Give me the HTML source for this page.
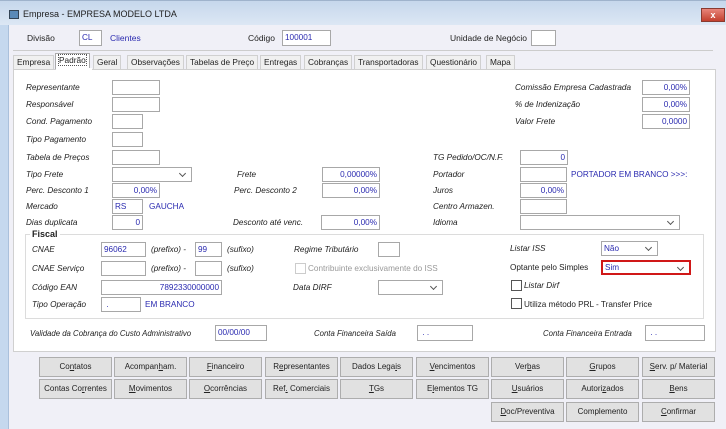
<!DOCTYPE html>
<html><head><meta charset="utf-8"><style>
*{box-sizing:border-box;margin:0;padding:0}
body{width:726px;height:429px;overflow:hidden;position:relative;background:#f0f0f7;font-family:"Liberation Sans",sans-serif;font-size:8.2px;color:#222}
.a{position:absolute;white-space:nowrap}
.t{position:absolute;top:0;left:0;width:726px;height:25px;background:linear-gradient(#c6d7ec,#dce7f4);border-top:1px solid #9fb3cc}
.lf{position:absolute;left:0;top:25px;width:9px;height:404px;background:#c5d8ee;border-right:1px solid #aac0db}
.i{font-style:italic}
.b{position:absolute;background:#fff;border:1px solid #a8a8a8;height:15px;color:#2a2ab0;font-size:8.2px;line-height:13px;padding:0 2px}
.r{text-align:right}
.bl{color:#2a2ab0}
.s::after{content:"";position:absolute;right:6px;top:3px;width:4px;height:4px;border-right:1px solid #555;border-bottom:1px solid #555;transform:rotate(45deg)}
.tab{position:absolute;top:55px;height:14px;line-height:13px;font-size:8.3px;padding:0 3px;border:1px solid #d0d0d0;border-bottom:none;background:#f0f0f0}
.btn{position:absolute;width:73px;height:20px;background:#e1e1e1;border:1px solid #adadad;text-align:center;line-height:18px;font-size:8px;color:#222}
.cb{position:absolute;width:11px;height:11px;border:1px solid #555;background:#fff}
</style></head><body>
<div class="t"></div>
<div class="a" style="left:9px;top:10px;width:10px;height:9px;background:#5a8ab8;border:1px solid #345"></div>
<div class="a" style="left:23px;top:9px;font-size:9px">Empresa - EMPRESA MODELO LTDA</div>
<div class="a" style="left:701px;top:8px;width:24px;height:14px;background:linear-gradient(#e8857a,#c3402e);border:1px solid #8a3a30;color:#fff;font-size:9px;text-align:center;line-height:12px;font-weight:bold">x</div>
<div class="lf"></div>
<div class="a" style="left:27px;top:33px;font-size:8.5px">Divisão</div>
<div class="b" style="left:79px;top:30px;width:23px;height:16px">CL</div>
<div class="a bl" style="left:110px;top:33px;font-size:8.5px">Clientes</div>
<div class="a" style="left:248px;top:33px;font-size:8.5px">Código</div>
<div class="b" style="left:282px;top:30px;width:49px;height:16px">100001</div>
<div class="a" style="left:450px;top:33px;font-size:8.5px">Unidade de Negócio</div>
<div class="b" style="left:531px;top:30px;width:25px;height:16px"></div>
<div class="a" style="left:13px;top:50px;width:700px;height:1px;background:#ccc"></div>
<div class="tab" style="left:13px">Empresa</div>
<div class="tab" style="left:55px;top:53px;height:17px;background:#fff;border-color:#aaa"><span style="outline:1px dotted #555">Padrão</span></div>
<div class="tab" style="left:93px">Geral</div>
<div class="tab" style="left:127px">Observações</div>
<div class="tab" style="left:186px">Tabelas de Preço</div>
<div class="tab" style="left:260px">Entregas</div>
<div class="tab" style="left:304px">Cobranças</div>
<div class="tab" style="left:354px">Transportadoras</div>
<div class="tab" style="left:426px">Questionário</div>
<div class="tab" style="left:486px">Mapa</div>
<div class="a" style="left:13px;top:69px;width:703px;height:283px;background:#fff;border:1px solid #d0d0d0"></div>
<div class="a" style="left:56px;top:68px;width:36px;height:3px;background:#fff"></div>

<div class="a i" style="left:26px;top:83px">Representante</div><div class="b" style="left:112px;top:80px;width:48px"></div>
<div class="a i" style="left:26px;top:100px">Responsável</div><div class="b" style="left:112px;top:97px;width:48px"></div>
<div class="a i" style="left:26px;top:117px">Cond. Pagamento</div><div class="b" style="left:112px;top:114px;width:31px"></div>
<div class="a i" style="left:26px;top:135px">Tipo Pagamento</div><div class="b" style="left:112px;top:132px;width:31px"></div>
<div class="a i" style="left:26px;top:153px">Tabela de  Preços</div><div class="b" style="left:112px;top:150px;width:48px"></div>
<div class="a i" style="left:26px;top:170px">Tipo Frete</div><div class="b s" style="left:112px;top:167px;width:80px"></div>
<div class="a i" style="left:26px;top:186px">Perc. Desconto 1</div><div class="b r" style="left:112px;top:183px;width:48px">0,00%</div>
<div class="a i" style="left:26px;top:202px">Mercado</div><div class="b" style="left:112px;top:199px;width:31px">RS</div><div class="a bl" style="left:149px;top:202px">GAUCHA</div>
<div class="a i" style="left:26px;top:218px">Dias duplicata</div><div class="b r" style="left:112px;top:215px;width:31px">0</div>

<div class="a i" style="left:237px;top:170px">Frete</div><div class="b r" style="left:322px;top:167px;width:58px">0,00000%</div>
<div class="a i" style="left:234px;top:186px">Perc. Desconto 2</div><div class="b r" style="left:322px;top:183px;width:58px">0,00%</div>
<div class="a i" style="left:233px;top:218px">Desconto até venc.</div><div class="b r" style="left:321px;top:215px;width:59px">0,00%</div>

<div class="a i" style="left:515px;top:83px">Comissão Empresa Cadastrada</div><div class="b r" style="left:642px;top:80px;width:48px">0,00%</div>
<div class="a i" style="left:515px;top:100px">% de Indenização</div><div class="b r" style="left:642px;top:97px;width:48px">0,00%</div>
<div class="a i" style="left:515px;top:117px">Valor Frete</div><div class="b r" style="left:642px;top:114px;width:48px">0,0000</div>

<div class="a i" style="left:433px;top:153px">TG Pedido/OC/N.F.</div><div class="b r" style="left:520px;top:150px;width:48px">0</div>
<div class="a i" style="left:433px;top:170px">Portador</div><div class="b" style="left:520px;top:167px;width:47px"></div><div class="a bl" style="left:571px;top:170px">PORTADOR EM BRANCO &gt;&gt;&gt;:</div>
<div class="a i" style="left:433px;top:186px">Juros</div><div class="b r" style="left:520px;top:183px;width:47px">0,00%</div>
<div class="a i" style="left:433px;top:202px">Centro Armazen.</div><div class="b" style="left:520px;top:199px;width:47px"></div>
<div class="a i" style="left:433px;top:218px">Idioma</div><div class="b s" style="left:520px;top:215px;width:160px"></div>

<div class="a" style="left:25px;top:234px;width:679px;height:85px;border:1px solid #dcdcdc"></div>
<div class="a" style="left:30px;top:229px;background:#fff;padding:0 2px;font-weight:bold;font-size:9px">Fiscal</div>
<div class="a i" style="left:32px;top:245px">CNAE</div><div class="b" style="left:101px;top:242px;width:45px">96062</div>
<div class="a i" style="left:151px;top:245px">(prefixo) -</div><div class="b" style="left:195px;top:242px;width:27px">99</div><div class="a i" style="left:227px;top:245px">(sufixo)</div>
<div class="a i" style="left:294px;top:245px">Regime Tributário</div><div class="b" style="left:378px;top:242px;width:22px"></div>
<div class="a i" style="left:32px;top:264px">CNAE Serviço</div><div class="b" style="left:101px;top:261px;width:45px"></div>
<div class="a i" style="left:151px;top:264px">(prefixo) -</div><div class="b" style="left:195px;top:261px;width:27px"></div><div class="a i" style="left:227px;top:264px">(sufixo)</div>
<div class="cb" style="left:295px;top:263px;border-color:#ccc"></div><div class="a" style="left:308px;top:264px;color:#999">Contribuinte exclusivamente do ISS</div>
<div class="a i" style="left:32px;top:283px">Código EAN</div><div class="b r" style="left:101px;top:280px;width:121px">7892330000000</div>
<div class="a i" style="left:293px;top:283px">Data DIRF</div><div class="b s" style="left:378px;top:280px;width:65px"></div>
<div class="a i" style="left:32px;top:300px">Tipo Operação</div><div class="b" style="left:101px;top:297px;width:40px">&nbsp;.</div><div class="a bl" style="left:145px;top:300px">EM BRANCO</div>

<div class="a i" style="left:510px;top:244px">Listar  ISS</div><div class="b s" style="left:601px;top:241px;width:57px">Não</div>
<div class="a" style="left:510px;top:263px">Optante pelo Simples</div><div class="b s" style="left:601px;top:260px;width:90px;border:2px solid #d01818;line-height:11px">Sim</div>
<div class="cb" style="left:511px;top:280px"></div><div class="a i" style="left:524px;top:281px">Listar Dirf</div>
<div class="cb" style="left:511px;top:298px"></div><div class="a" style="left:524px;top:300px">Utiliza método PRL - Transfer Price</div>

<div class="a i" style="left:30px;top:329px;font-size:7.8px">Validade da Cobrança do Custo Administrativo</div><div class="b" style="left:215px;top:325px;width:52px;height:16px">00/00/00</div>
<div class="a i" style="left:314px;top:329px;font-size:7.8px">Conta Financeira Saída</div><div class="b" style="left:417px;top:325px;width:56px;height:16px">&nbsp;. .</div>
<div class="a i" style="left:543px;top:329px;font-size:7.8px">Conta Financeira Entrada</div><div class="b" style="left:645px;top:325px;width:60px;height:16px">&nbsp;. .</div>

<div class="btn" style="left:39px;top:357px">Co<u>n</u>tatos</div>
<div class="btn" style="left:114px;top:357px">Acompan<u>h</u>am.</div>
<div class="btn" style="left:189px;top:357px"><u>F</u>inanceiro</div>
<div class="btn" style="left:265px;top:357px">R<u>e</u>presentantes</div>
<div class="btn" style="left:340px;top:357px">Dados Lega<u>i</u>s</div>
<div class="btn" style="left:416px;top:357px"><u>V</u>encimentos</div>
<div class="btn" style="left:491px;top:357px">Ver<u>b</u>as</div>
<div class="btn" style="left:566px;top:357px"><u>G</u>rupos</div>
<div class="btn" style="left:642px;top:357px"><u>S</u>erv. p/ Material</div>
<div class="btn" style="left:39px;top:379px">Contas Co<u>r</u>rentes</div>
<div class="btn" style="left:114px;top:379px"><u>M</u>ovimentos</div>
<div class="btn" style="left:189px;top:379px"><u>O</u>corrências</div>
<div class="btn" style="left:265px;top:379px">Ref<u>.</u> Comerciais</div>
<div class="btn" style="left:340px;top:379px"><u>T</u>Gs</div>
<div class="btn" style="left:416px;top:379px">E<u>l</u>ementos TG</div>
<div class="btn" style="left:491px;top:379px"><u>U</u>suários</div>
<div class="btn" style="left:566px;top:379px">Autori<u>z</u>ados</div>
<div class="btn" style="left:642px;top:379px"><u>B</u>ens</div>
<div class="btn" style="left:491px;top:402px"><u>D</u>oc/Preventiva</div>
<div class="btn" style="left:566px;top:402px">Complemento</div>
<div class="btn" style="left:642px;top:402px"><u>C</u>onfirmar</div>
</body></html>
